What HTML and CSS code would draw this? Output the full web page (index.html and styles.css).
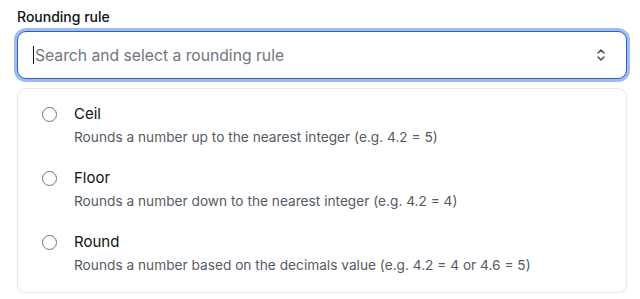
FILE: index.html
```html
<!DOCTYPE html>
<html lang="en">
<head>
    <meta charset="UTF-8">
    <meta name="viewport" content="width=device-width, initial-scale=1.0">
    <title>Rounding rule</title>
    <link rel="stylesheet" href="styles.css">
</head>
<body>
<div class="field">
    <label for="rounding-rule" class="field-label">Rounding rule</label>
    <div class="combo combo-open">
        <span class="caret"></span>
        <input type="text" id="rounding-rule" class="combo-input" placeholder="Search and select a rounding rule">
        <svg class="combo-chevron" width="10" height="16" viewBox="0 0 10 16" aria-hidden="true">
            <path d="M2 6 L5 3 L8 6" fill="none" stroke="#4b5563" stroke-width="1.6" stroke-linecap="round" stroke-linejoin="round"/>
            <path d="M2 10 L5 13 L8 10" fill="none" stroke="#4b5563" stroke-width="1.6" stroke-linecap="round" stroke-linejoin="round"/>
        </svg>
    </div>

    <ul class="options">
        <li class="option">
            <span class="radio"></span>
            <div class="option-text">
                <div class="option-title">Ceil</div>
                <div class="option-desc">Rounds a number up to the nearest integer (e.g. 4.2 = 5)</div>
            </div>
        </li>
        <li class="option">
            <span class="radio"></span>
            <div class="option-text">
                <div class="option-title">Floor</div>
                <div class="option-desc">Rounds a number down to the nearest integer (e.g. 4.2 = 4)</div>
            </div>
        </li>
        <li class="option">
            <span class="radio"></span>
            <div class="option-text">
                <div class="option-title">Round</div>
                <div class="option-desc">Rounds a number based on the decimals value (e.g. 4.2 = 4 or 4.6 = 5)</div>
            </div>
        </li>
    </ul>
</div>
</body>
</html>
```

FILE: styles.css
```css
body {
    margin: 0;
    padding: 0;
    background: #ffffff;
    font-family: Inter, "Noto Sans", sans-serif;
    color: #111827;
}
.field {
    display: flex;
    flex-direction: column;
    padding: 8px 13px 0 17px;
}
.field-label {
    font-size: 14px;
    font-weight: 500;
    line-height: 18px;
    margin-bottom: 5px;
    color: #111111;
}
.combo {
    display: flex;
    align-items: center;
    height: 48px;
    box-sizing: border-box;
    border: 1px solid #2f5fc4;
    border-radius: 9px;
    background: #fff;
    padding: 0 20px 0 15px;
}
.combo-open {
    box-shadow: 0 0 0 3px #9dbcf3;
}
/* focused caret, drawn so it shows in a still picture */
.caret {
    width: 1px;
    height: 18px;
    background: #111111;
    margin-right: 1px;
    flex-shrink: 0;
}
.combo-input {
    flex: 1;
    border: none;
    outline: none;
    background: transparent;
    font-family: inherit;
    font-size: 15.7px;
    color: #111827;
    padding: 0;
}
.combo-input::placeholder {
    color: #70757f;
}
.combo-chevron {
    flex-shrink: 0;
}
.options {
    list-style: none;
    margin: 9px 0 0 0;
    padding: 4px 0 7px 0;
    border: 1px solid #e8e9ec;
    border-radius: 9px;
    box-shadow: 0 2px 4px rgba(0, 0, 0, 0.06);
    background: #fff;
}
.option {
    display: flex;
    align-items: flex-start;
    gap: 17px;
    padding: 10px 24px;
}
.radio {
    width: 15px;
    height: 15px;
    box-sizing: border-box;
    border: 1px solid #6f737a;
    border-radius: 50%;
    margin-top: 4px;
    flex-shrink: 0;
}
.option-title {
    font-size: 15px;
    line-height: 22px;
    color: #111111;
}
.option-desc {
    font-size: 13.7px;
    line-height: 20px;
    margin-top: 2px;
    color: #545b66;
}
```
